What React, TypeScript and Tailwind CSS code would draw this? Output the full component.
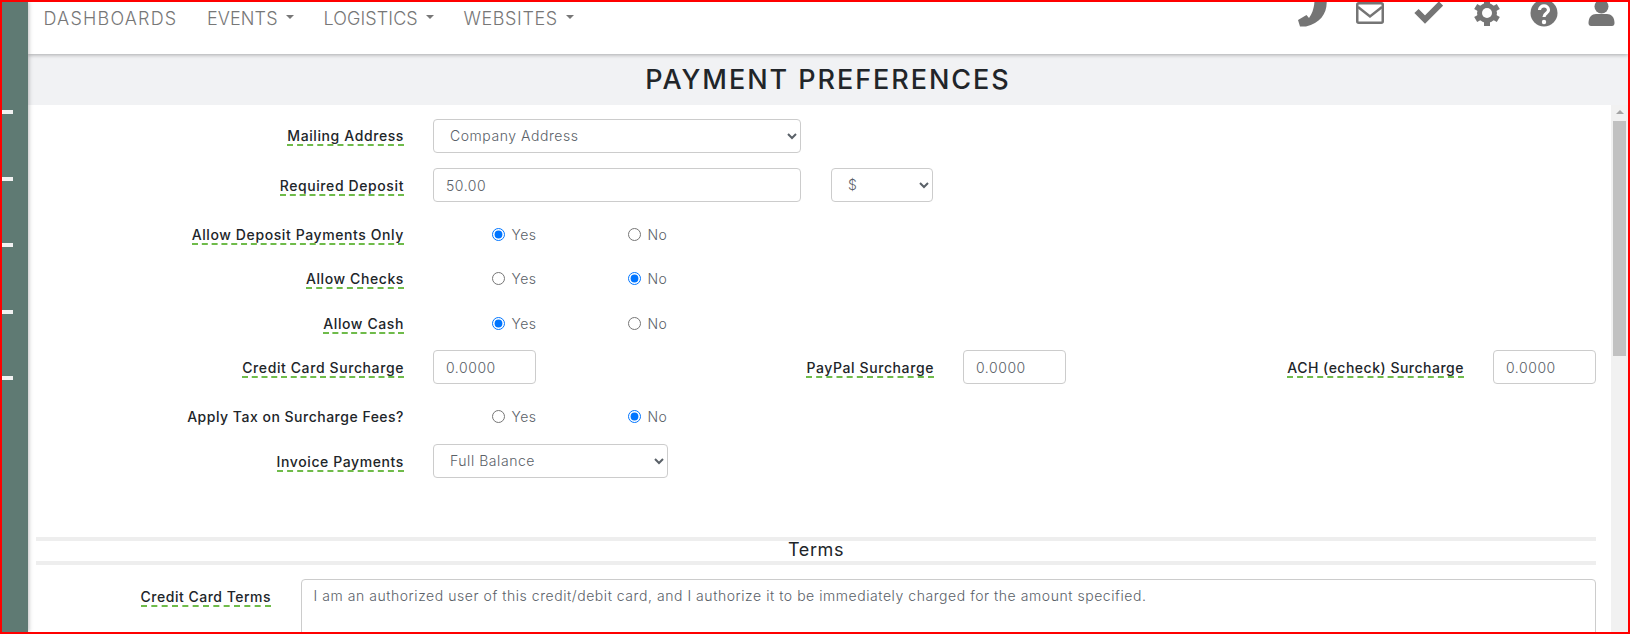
import React from "react";

const sans = "font-['Inter','Liberation_Sans',sans-serif]";

const Caret = () => (
  <span className="ml-[8px] inline-block w-0 h-0 border-x-[4px] border-x-transparent border-t-[4px] border-t-[#777777] translate-y-[-2px]" />
);

const NavItem = ({ label, caret, className }: { label: string; caret?: boolean; className: string }) => (
  <div className={`flex items-center text-[18px] font-light text-[#777777] ${className}`}>
    {label}
    {caret && <Caret />}
  </div>
);

const icons = [
  // phone
  <path key="phone" d="M17.500-3 L29.500-3 C31 10 24 21 9 24.500 L3 24.500 L1 18 L9.500 13 L12 16 C15 12 17.500 6 17.500-3Z" />,
  // envelope
  <g key="mail" fill="none" stroke="#757575" strokeWidth="2.500" transform="translate(1 0)">
    <rect x="1.250" y="1.250" width="25.500" height="19.500" rx="1.500" />
    <path d="M2 5 L14 14.500 L26 5" />
  </g>,
  // check
  <path key="check" d="M3.500 9 L12 17.500 L28 1.500" fill="none" stroke="#757575" strokeWidth="6" />,
  // cog
  <g key="cog" transform="translate(2 0)">
    <g stroke="#757575" strokeWidth="6">
      <path d="M15-2 V24" />
      <path d="M3.700 4.500 L26.300 17.500" />
      <path d="M3.700 17.500 L26.300 4.500" />
    </g>
    <circle cx="15" cy="11" r="10" />
    <circle cx="15" cy="11" r="5" fill="#ffffff" />
  </g>,
  // question
  <g key="help" transform="translate(1 0)">
    <circle cx="15" cy="11" r="13.500" />
    <path d="M10.500 8 C10.500 2.500 19.500 2.500 19.500 8 C19.500 11.500 15 11 15 15" fill="none" stroke="#ffffff" strokeWidth="3.200" />
    <circle cx="15" cy="20" r="2.200" fill="#ffffff" />
  </g>,
  // user
  <g key="user">
    <circle cx="15.500" cy="4.500" r="7" />
    <path d="M2.500 21 C2.500 15 6 12 10 12 H21 C25 12 28.500 15 28.500 21 C28.500 23 27.500 24 26 24 H5 C3.500 24 2.500 23 2.500 21Z" />
  </g>,
];

const Header = () => (
  <header className="relative z-[5] h-[52px] shrink-0 bg-white shadow-[0_1px_4px_rgba(0,0,0,0.3)] flex justify-between overflow-hidden">
    <nav className="flex h-[33px] pl-[15.500px]">
      <NavItem label="DASHBOARDS" className="w-[163.500px] tracking-[1.2px]" />
      <NavItem label="EVENTS" caret className="w-[116.500px] tracking-[0.1px]" />
      <NavItem label="LOGISTICS" caret className="w-[140px] tracking-[0.1px]" />
      <NavItem label="WEBSITES" caret className="w-[120px] tracking-[0.6px]" />
    </nav>
    <div className="flex gap-[27.800px] pr-[12px]">
      {icons.map((icon, i) => (
        <svg key={i} viewBox="0 0 30 26" className="w-[30px] h-[26px] overflow-hidden" fill="#757575">
          {icon}
        </svg>
      ))}
    </div>
  </header>
);

const Label = ({ text, plain, className = "w-[368px] tracking-[0.6px]" }: { text: string; plain?: boolean; className?: string }) => (
  <div className={`${className} shrink-0 text-right text-[14px] font-medium text-[#212529]`}>
    <span className={`inline-block leading-[17px] ${plain ? "" : "border-b-2 border-dashed border-[#6fbb4a]"}`}>{text}</span>
  </div>
);

const field =
  "h-[34px] rounded-[4px] border border-[#cccccc] bg-white text-[14px] text-[#5a6168] tracking-[0.55px] font-light";

const Select = ({ value, className }: { value: string; className: string }) => (
  <select defaultValue={value} className={`${field} ${className} px-[12px] pb-[2px] shrink-0`}>
    <option>{value}</option>
  </select>
);

const Input = ({ value, width }: { value: string; width: string }) => (
  <input readOnly defaultValue={value} className={`${field} ${width} px-[12px] ml-[29px] shrink-0`} />
);

const Radio = ({ name, label, checked }: { name: string; label: string; checked?: boolean }) => (
  <label className="flex items-center w-[136px] text-[14px] font-light text-[#5a6168] tracking-[0.4px]">
    <input type="radio" name={name} defaultChecked={checked} className="w-[13px] h-[13px] mr-[7px]" />
    {label}
  </label>
);

const RadioRow = ({ label, yes, plain, height, tight }: { label: string; yes: boolean; plain?: boolean; height: string; tight?: boolean }) => (
  <div className={`flex items-center ${height}`}>
    <Label text={label} plain={plain} className={tight ? "w-[368px] tracking-[0.5px]" : undefined} />
    <div className="flex ml-[87.500px]">
      <Radio name={label} label="Yes" checked={yes} />
      <Radio name={label} label="No" checked={!yes} />
    </div>
  </div>
);

const Form = () => (
  <div className="flex-1 overflow-hidden pl-[8px] pr-[15px] pt-[14px]">
    <div className="flex items-center">
      <Label text="Mailing Address" className="w-[368px] tracking-[0.6px] pb-[2px]" />
      <Select value="Company Address" className="w-[368px] ml-[29px]" />
    </div>
    <div className="flex items-center mt-[15px]">
      <Label text="Required Deposit" />
      <Input value="50.00" width="w-[368px]" />
      <Select value="$" className="w-[102px] ml-[30px]" />
    </div>
    <div className="mt-[10px]">
      <RadioRow label="Allow Deposit Payments Only" yes height="h-[45px]" />
      <RadioRow label="Allow Checks" yes={false} height="h-[43px]" />
      <RadioRow label="Allow Cash" yes height="h-[46px]" />
    </div>
    <div className="flex items-center mt-[4px]">
      <Label text="Credit Card Surcharge" />
      <Input value="0.0000" width="w-[103px]" />
      <Label text="PayPal Surcharge" className="w-[398px] tracking-[0.6px]" />
      <Input value="0.0000" width="w-[103px]" />
      <Label text="ACH (echeck) Surcharge" className="w-[398px] tracking-[0.5px]" />
      <Input value="0.0000" width="w-[103px]" />
    </div>
    <div className="mt-[10px]">
      <RadioRow label="Apply Tax on Surcharge Fees?" yes={false} plain tight height="h-[44px]" />
    </div>
    <div className="flex items-center mt-[6px]">
      <Label text="Invoice Payments" />
      <Select value="Full Balance" className="w-[235px] ml-[29px]" />
    </div>
    <div className="mt-[59px] h-[28px] border-y-4 border-[#eeeeee] flex items-center justify-center pb-[3px] text-[18px] text-[#212529] tracking-[0.6px]">
      Terms
    </div>
    <div className="flex items-start mt-[14px]">
      <div className="pt-[7px]">
        <Label text="Credit Card Terms" className="w-[235px] tracking-[0.5px]" />
      </div>
      <textarea
        readOnly
        defaultValue="I am an authorized user of this credit/debit card, and I authorize it to be immediately charged for the amount specified."
        className="ml-[29.500px] flex-1 h-[120px] rounded-[4px] border border-[#cccccc] px-[12px] pt-[5px] text-[14px] font-light text-[#5a6168] tracking-[0.55px] resize-none"
      />
    </div>
  </div>
);

const Scrollbar = () => (
  <div className="w-[17px] shrink-0 bg-[#f1f1f1] flex flex-col items-center">
    <div className="mt-[5px] w-0 h-0 border-x-[4px] border-x-transparent border-b-[4px] border-b-[#a3a3a3]" />
    <div className="mt-[7px] w-[13px] h-[235px] bg-[#c1c1c1]" />
  </div>
);

export default function App() {
  return (
    <div className={`${sans} w-[1630px] h-[634px] border-2 border-[#ff0000] bg-white flex overflow-hidden`}>
      <aside className="relative z-10 w-[26px] shrink-0 bg-[#5f7a73] shadow-[1px_0_4px_rgba(0,0,0,0.25)] pt-[108px] flex flex-col gap-[62.500px]">
        {[0, 1, 2, 3, 4].map((i) => (
          <div key={i} className="w-[11px] h-[4px] bg-[#f2f2f2]" />
        ))}
      </aside>
      <main className="flex-1 min-w-0 flex flex-col">
        <Header />
        <div className="h-[51px] shrink-0 bg-[#f1f2f4] flex items-center justify-center pt-[2px] text-[27px] font-medium tracking-[1.95px] text-[#212529]">
          PAYMENT PREFERENCES
        </div>
        <div className="flex-1 min-h-0 flex">
          <Form />
          <Scrollbar />
        </div>
      </main>
    </div>
  );
}
